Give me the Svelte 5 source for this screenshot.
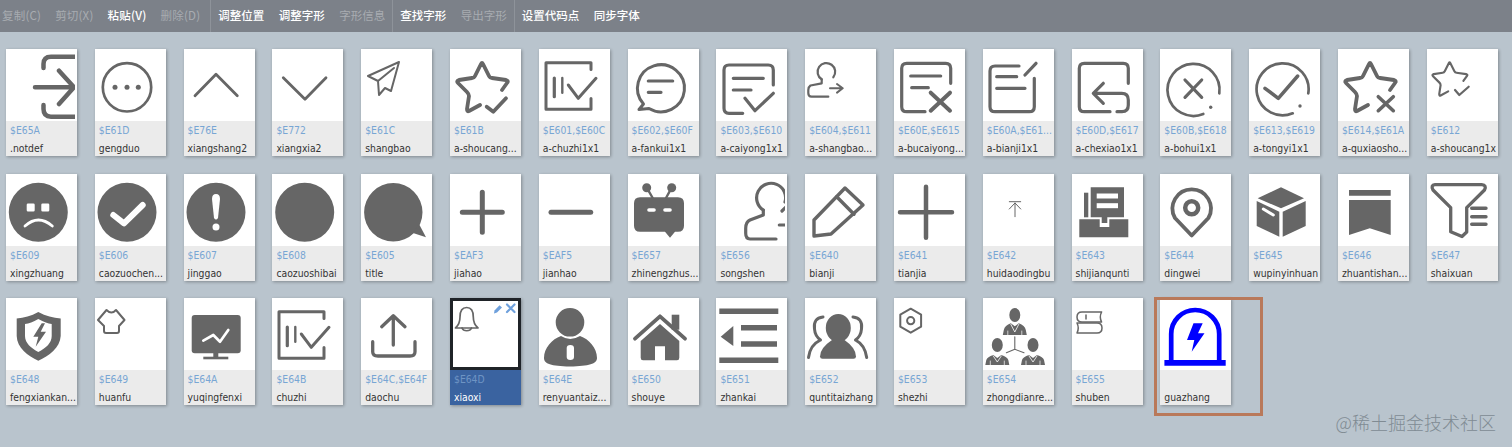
<script>
	const INK = '#666';
	const BLUE = '#0000ff';

	// s = stroked path, f = filled path; coordinates are card pixels
	const s = (d, w = 3, c = INK, tf) => ({ d, fill: 'none', stroke: c, sw: w, tf });
	const f = (d, c = INK) => ({ d, fill: c, stroke: 'none', sw: 0 });
	const circle = (cx, cy, r) =>
		`M${cx - r} ${cy}a${r} ${r} 0 1 0 ${2 * r} 0a${r} ${r} 0 1 0 ${-2 * r} 0Z`;
	const rect = (x, y, w, h) => `M${x} ${y}h${w}v${h}h${-w}Z`;
	const ellipse = (cx, cy, rx, ry) =>
		`M${cx - rx} ${cy}a${rx} ${ry} 0 1 0 ${2 * rx} 0a${rx} ${ry} 0 1 0 ${-2 * rx} 0Z`;

	const STAR =
		'M52 41L57 34Q59 32 56 31L42 29Q40 29 39 27L33 15Q32 13 31 15L25 27Q24 29 22 29L9 31Q6 32 8 34L17 43Q19 45 19 47L17 60Q17 63 19 62L30 56';

	const chuzhi = [
		s('M52 20.5V13.7H7V60.3H52V49.5', 3),
		s('M15.3 29V47.7', 3.2),
		s('M23.3 29V43.7', 2.4),
		s('M29.3 36L39.3 49.3L57 29.3', 3)
	];

	const person = (x, y, t, b) => [
		f(ellipse(x, y, 5.5, 7)),
		f(`M${x - 12} ${b}L${x - 11} ${b - 5}Q${x - 10} ${t + 2} ${x - 4} ${t}L${x} ${t + 3}L${x + 4} ${t}Q${x + 10} ${t + 2} ${x + 11} ${b - 5}L${x + 12} ${b}Z`),
		s(`M${x - 4} ${t + 1}L${x} ${b - 3}L${x + 4} ${t + 1}`, 0.8, '#fff'),
		s(`M${x - 7} ${b}V${b - 4}M${x + 7} ${b}V${b - 4}`, 0.7, '#fff')
	];

	const icons = {
		notdef: [
			s('M70 7.7H45Q37.5 7.7 37.5 15V19M37.5 56V60Q37.5 67.7 45 67.7H70', 4.5),
			s('M29 38.3H70M53 21.7L68 38.3L53 55', 4.5)
		],
		more: [
			s(circle(32, 38.3, 24.2), 2.7),
			f(circle(20, 38.3, 2.5)),
			f(circle(32, 38.3, 2.5)),
			f(circle(43.3, 38.3, 2.5))
		],
		up: [s('M11 46.7L32 25.3L53.3 46.7', 2.8)],
		down: [s('M11.3 28.7L33 50.3L54 28.7', 2.8)],
		plane: [s('M38 13L7 27L17 32L18 46L24 39L30 42ZM17 32L33 19', 2)],
		starCheck: [s(STAR, 3.8), s('M36.7 57.7L43.3 62.7L56 49.3', 3.8)],
		chuzhi,
		feedback: [
			s('M21 59.5L11 60.5L15.5 55A23.5 23.5 0 1 1 21 59.5Z', 3),
			s('M20.3 32H44.7M20.3 43.3H33', 3.2)
		],
		adopt: [
			s('M57.3 36V21Q57.3 16 52.3 16H13Q8 16 8 21V59.3Q8 64.3 13 64.3H26.7', 3.2),
			s('M17.3 29.3H47.3M17.3 41H35', 3.2),
			s('M29 49.3L39 61.7L57.3 44.3', 3.2)
		],
		report: [
			s('M16.7 30.3V34.3L5.5 36.5Q3.3 38 3.3 41V44Q3.3 47.7 6.5 47.7H23.3', 2.2),
			s('M16.7 30.3A8.8 8.8 0 1 1 28.3 28.3', 2.2),
			s('M25 39.3H37.7M32 35L37.7 39.3L32 43.6', 2)
		],
		reject: [
			s('M56.7 34.3V19.3Q56.7 14.3 51.7 14.3H12.7Q7.7 14.3 7.7 19.3V57.7Q7.7 62.7 12.7 62.7H31', 3.2),
			s('M16.7 27H46.7M17.7 38.7H34.3', 3.2),
			s('M36.7 43.7L56 61.7M56 43.7L36.7 61.7', 4)
		],
		edit: [
			s('M36 17H12Q7 17 7 22V57.7Q7 62.7 12 62.7H46.3Q51.3 62.7 51.3 57.7V29.3', 3.2),
			s('M13.7 27.7H33.7M13.7 39.3H42M42 26L53 14.3', 3.2)
		],
		undo: [
			s('M56.3 34.3V19.3Q56.3 14.3 51.3 14.3H12.3Q7.3 14.3 7.3 19.3V57.7Q7.3 62.7 12.3 62.7H38', 3.2),
			s('M31.3 34.3L21.3 44.3L31.3 54.3M21.3 44.3H49.7Q56.3 44.3 56.3 51V56Q56.3 62.7 50 62.7H45', 3.2)
		],
		rebut: [
			s('M59.3 44.3A26 26 0 1 0 43.3 65', 2.7),
			s('M25 31L41.7 48.3M41.7 31L25 48.3', 3.2),
			f(circle(50.7, 58.3, 1.7))
		],
		agree: [
			s('M59.3 44.3A26 26 0 1 0 43.7 64.3', 2.7),
			s('M16 39.3L29.3 49.3L48.7 27', 3.5),
			f(circle(51, 57, 1.7))
		],
		starX: [s(STAR, 3.8), s('M40.3 47.7L55.3 61.7M55.3 47.7L40.3 61.7', 3.6)],
		starSmall: [
			s(STAR, 3.1, INK, 'translate(.5 3.7) scale(.69)'),
			s('M28 41L32.3 46L41.7 37.7', 2.2)
		],
		sad: [
			f(circle(32.3, 38.3, 29.5)),
			f('M22 29.5h5.4q1.3 0 1.3 1.3v5.4q0 1.3-1.3 1.3h-5.4q-1.3 0-1.3-1.3v-5.4q0-1.3 1.3-1.3Z', '#fff'),
			f('M36.6 29.5h5.4q1.3 0 1.3 1.3v5.4q0 1.3-1.3 1.3h-5.4q-1.3 0-1.3-1.3v-5.4q0-1.3 1.3-1.3Z', '#fff'),
			s('M19 52Q32.3 40 46.3 52', 2.8, '#fff')
		],
		ok: [f(circle(32, 38.3, 29.5)), s('M18.3 41L29 49.3L47.7 31', 6, '#fff')],
		warn: [
			f(circle(32, 38.3, 29.5)),
			f('M28 25Q28 20 32 20Q36 20 36 25L34 44Q32 47 30 44Z', '#fff'),
			f(circle(32, 53, 3.5), '#fff')
		],
		fail: [f(circle(32.7, 38.3, 29.5))],
		bubble: [
			f(circle(32.3, 38.3, 29.2)),
			f('M52 59L65 63.3L58 50Z')
		],
		plus: [s('M12.3 38.3H52.3M32.3 18.3V58.3', 5)],
		minus: [s('M12 38.3H51.7', 5)],
		robot: [
			f('M12 23.3H50Q56 23.3 56 29.3V51.7Q56 57.7 50 57.7H47L42 63.7L37 57.7H12Q6 57.7 6 51.7V29.3Q6 23.3 12 23.3Z'),
			s('M18.7 13.7L24.7 24M43.7 13.7L38 24', 2.4),
			f(circle(18.7, 13.7, 4.5)),
			f(circle(43.7, 13.7, 4.5)),
			f('M21 34.2h5q1.8 0 1.8 1.8t-1.8 1.8h-5q-1.8 0-1.8-1.8t1.8-1.8Z', '#fff'),
			f('M37 34.2h5q1.8 0 1.8 1.8t-1.8 1.8h-5q-1.8 0-1.8-1.8t1.8-1.8Z', '#fff')
		],
		submit: [
			s('M47.3 36V41L34 46Q29.7 48 29.7 54.3V59.3Q29.7 65 34 65H60', 3.2),
			s('M47.3 36A14.5 14.5 0 1 1 69 28', 3.2),
			s('M63.3 51H72M66 37L72 31', 3.2)
		],
		pencil: [
			s('M40 14L58 31L26 60L9 62L9 46Z', 3.4),
			s('M31.7 22.7L49 40.3', 3.4)
		],
		add: [s('M6 38.3H58M32 12.8V63.8', 4.5)],
		top: [s('M26.3 27.7H37.7M32 29V42.7M26.3 35L32 29L37.7 35', 1)],
		inbox: [
			f('M7.3 45.3H27.7V53H37.3V45.3H56.3V63.3H7.3Z'),
			f('M18.7 13.3H52V43.3H35.3V49H29.7V43.3H18.7Z'),
			f(rect(24.7, 19.5, 21.3, 5), '#fff'),
			f(rect(24.7, 29.2, 21.3, 5), '#fff'),
			f(rect(12, 18.7, 4.3, 24.6))
		],
		pin: [
			s('M31.7 61.5L15 44A19.2 19.2 0 1 1 48.4 44Z', 3.8),
			s(circle(31.7, 33.7, 6.5), 4.5)
		],
		box: [
			f('M32 13.3L55 24.3L32 34.3L8.7 24.3Z'),
			f('M7.7 27L30.3 37.7V62.7L7.7 52Z'),
			f('M33.7 37.7L56.7 27V52L33.7 62.7Z'),
			s('M14.3 35L24.3 41', 3, '#fff')
		],
		banner: [f(rect(11, 16, 41.7, 5.7)), f('M11 26H52.7V61L31.8 54.3L11 61Z')],
		filter: [
			s('M8 10.7H54.7Q60 11 57.5 16L39.7 33.7V58L35 62.5L23.7 57.7V33.7L6 16Q3.5 11 8 10.7Z', 3.3),
			s('M44.7 34.3H59M44.7 42.7H59M44.7 50.3H59', 3.4)
		],
		shield: [
			f('M32.3 14C25 18 18 20 10.7 20.5V38C11 50 22 58 32.3 62.7C43 58 54 50 54.7 38V20.5C47 20 40 18 32.3 14Z'),
			f('M32.3 21C27 24 23 25.5 19 26V38C19 45 25 50 32.3 54C40 50 45.7 45 45.7 38V26C42 25.5 38 24 32.3 21Z', '#fff'),
			f('M35.7 25.3L27.3 38.7H32.3L29.7 48.7L40 33.7H34.7L39 25.3Z')
		],
		shirt: [
			s('M11.5 12L3 22L9 28V33Q9 35 11 35H22Q24 35 24 33V28L29.5 22L21 12Q16.5 17 11.5 12Z', 2)
		],
		monitor: [
			f('M10.7 17H53.7Q56.7 17 56.7 20V52.3Q56.7 55.3 53.7 55.3H10.7Q7.7 55.3 7.7 52.3V20Q7.7 17 10.7 17Z'),
			s('M19.3 42.7L29.3 37L36 43.7L44.3 32', 2.7, '#fff'),
			f(rect(29.3, 55, 5, 4)),
			f(rect(19.3, 58.7, 25, 2.6))
		],
		upload: [
			s('M32.3 20.3V47M20.7 28.7L32.3 17.7L44 28.7', 3.3),
			s('M11.7 43.7V53.7Q11.7 58 17 58H49Q54 58 54 53.7V43.7', 3.3)
		],
		bell: [
			s('M5.5 30Q10 26 10 19C10 12 13 9.5 16.7 9.5C20.5 9.5 23.3 12 23.3 19Q23.3 26 28 30Z', 1.7),
			s('M12 30A5 4 0 0 0 21.5 30', 1.7),
			f('M44.5 12.5L49.5 7.2L52 9.5L47 14.5L44 15.5Z', '#6ea0dc'),
			s('M57 6.5L64.5 14M64.5 6.5L57 14', 2.2, '#6ea0dc')
		],
		staff: [
			f(circle(31, 24.3, 14.3)),
			f('M22 38Q31 44 41 38C50 41 58 50 58 60C58 66 50 68 31 68.5C12 68 5 66 5 60C5 50 13 41 22 38Z'),
			f('M27.7 50Q27.7 47 31.3 47Q35 47 35 50V59Q35 62 31.3 62Q27.7 62 27.7 59Z', '#fff')
		],
		home: [
			s('M7 40.7L32 18.3L57 40.7', 3.8),
			f(rect(43.7, 16.7, 7.6, 15)),
			f('M32 26L51.3 43V59.8Q51.3 62.3 49 62.3H37V48.3H27V62.3H15Q12.7 62.3 12.7 59.8V43Z')
		],
		expand: [
			f(rect(3.3, 10.5, 59, 5.5)),
			f(rect(25, 27, 36, 5.5)),
			f(rect(25, 43.3, 36, 5.5)),
			f(rect(3.3, 59.6, 59, 5.5)),
			f('M17.3 28L4.7 38.7L17.3 48Z')
		],
		group: [
			f(ellipse(33.3, 30, 12.5, 14)),
			f('M15 58.5Q15 50 27 42H39.5Q51 50 51 58.5Q51 60.7 48.5 60.7H17.5Q15 60.7 15 58.5Z'),
			s('M18 19Q8 20 9.5 31Q10 38 15.5 42Q5 47 3.5 59.5', 3),
			s('M48 19Q58 20 56.5 31Q56 38 50.5 42Q60 47 61.7 59.5', 3)
		],
		gear: [
			s('M16.7 10.7L27.1 16.7V28.7L16.7 34.7L6.3 28.7V16.7Z', 2),
			s(circle(16.7, 22.7, 3.6), 2)
		],
		team: [
			...person(31.8, 17, 25.3, 37),
			...person(14.3, 47, 57, 67),
			...person(50, 47, 57, 67),
			s('M31.8 38.7V51.3L23.4 54.7M31.8 51.3L41 54.7', 1.1)
		],
		books: [
			s('M29.6 14H10Q5 14 5 19Q5 24 10 24H29.6Q27 19 29.6 14ZM14 17V21', 1.5),
			s('M5 25H25Q30 25 30 30Q30 35 25 35H5Q7.5 30 5 25Z', 1.5)
		],
		fault: [
			s('M11.2 62V36A24 24 0 0 1 59.2 36V62', 4.7, BLUE),
			f(rect(4.4, 62, 61.3, 5.7), BLUE),
			f('M33.5 25.3H42.7L38 35.3H44.5L31.7 53.7L34.3 42H27Z', BLUE)
		]
	};

	const cards = [
		['$E65A', '.notdef', 'notdef'],
		['$E61D', 'gengduo', 'more'],
		['$E76E', 'xiangshang2', 'up'],
		['$E772', 'xiangxia2', 'down'],
		['$E61C', 'shangbao', 'plane'],
		['$E61B', 'a-shoucang...', 'starCheck'],
		['$E601,$E60C', 'a-chuzhi1x1', 'chuzhi'],
		['$E602,$E60F', 'a-fankui1x1', 'feedback'],
		['$E603,$E610', 'a-caiyong1x1', 'adopt'],
		['$E604,$E611', 'a-shangbao...', 'report'],
		['$E60E,$E615', 'a-bucaiyong...', 'reject'],
		['$E60A,$E61...', 'a-bianji1x1', 'edit'],
		['$E60D,$E617', 'a-chexiao1x1', 'undo'],
		['$E60B,$E618', 'a-bohui1x1', 'rebut'],
		['$E613,$E619', 'a-tongyi1x1', 'agree'],
		['$E614,$E61A', 'a-quxiaosho...', 'starX'],
		['$E612', 'a-shoucang1x', 'starSmall'],
		['$E609', 'xingzhuang', 'sad'],
		['$E606', 'caozuochen...', 'ok'],
		['$E607', 'jinggao', 'warn'],
		['$E608', 'caozuoshibai', 'fail'],
		['$E605', 'title', 'bubble'],
		['$EAF3', 'jiahao', 'plus'],
		['$EAF5', 'jianhao', 'minus'],
		['$E657', 'zhinengzhus...', 'robot'],
		['$E656', 'songshen', 'submit'],
		['$E640', 'bianji', 'pencil'],
		['$E641', 'tianjia', 'add'],
		['$E642', 'huidaodingbu', 'top'],
		['$E643', 'shijianqunti', 'inbox'],
		['$E644', 'dingwei', 'pin'],
		['$E645', 'wupinyinhuan', 'box'],
		['$E646', 'zhuantishan...', 'banner'],
		['$E647', 'shaixuan', 'filter'],
		['$E648', 'fengxiankan...', 'shield'],
		['$E649', 'huanfu', 'shirt'],
		['$E64A', 'yuqingfenxi', 'monitor'],
		['$E64B', 'chuzhi', 'chuzhi'],
		['$E64C,$E64F', 'daochu', 'upload'],
		['$E64D', 'xiaoxi', 'bell'],
		['$E64E', 'renyuantaiz...', 'staff'],
		['$E650', 'shouye', 'home'],
		['$E651', 'zhankai', 'expand'],
		['$E652', 'quntitaizhang', 'group'],
		['$E653', 'shezhi', 'gear'],
		['$E654', 'zhongdianre...', 'team'],
		['$E655', 'shuben', 'books'],
		['', 'guazhang', 'fault']
	];

	const toolbar = [
		[['复制(C)', 1], ['剪切(X)', 1], ['粘贴(V)', 0], ['删除(D)', 1]],
		[['调整位置', 0], ['调整字形', 0], ['字形信息', 1]],
		[['查找字形', 0], ['导出字形', 1]],
		[['设置代码点', 0], ['同步字体', 0]]
	];
</script>

<div class="page">
	<nav class="toolbar">
		{#each toolbar as group}
			<div class="tool-group">
				{#each group as [label, disabled]}
					<span class="tool" class:disabled>{label}</span>
				{/each}
			</div>
		{/each}
	</nav>

	<main class="grid">
		{#each cards as [code, name, icon]}
			<div class="card" class:selected={name === 'xiaoxi'} class:marked={name === 'guazhang'}>
				<div class="glyph">
					<svg width="69" height="72" viewBox="0 0 69 72" stroke-linecap="round" stroke-linejoin="round">
						{#each icons[icon] as p}
							<path
								d={p.d}
								fill={p.fill}
								stroke={p.stroke}
								stroke-width={p.sw}
								transform={p.tf}
							/>
						{/each}
					</svg>
				</div>
				<div class="meta">
					<span class="code">{code}</span>
					<span class="name">{name}</span>
				</div>
			</div>
		{/each}
	</main>

	<div class="watermark">@稀土掘金技术社区</div>
</div>

<style>
	:global(body) {
		background: #b9c4cd;
	}

	.page {
		position: relative;
		height: 447px;
		overflow: hidden;
		font-family: 'DejaVu Sans Condensed', 'DejaVu Sans', 'Noto Sans CJK SC', sans-serif;
	}

	.toolbar {
		display: flex;
		box-sizing: border-box;
		height: 32px;
		padding: 0 0 0 2px;
		background: #7c8189;
	}

	.tool-group {
		display: flex;
		align-items: center;
		gap: 14.5px;
		padding: 0 7px 2px;
		border-right: 1px solid #8e939a;
	}

	.tool-group:first-child {
		gap: 14px;
		padding-left: 0;
		padding-right: 10px;
	}

	.tool-group:first-child .tool {
		letter-spacing: 0.2px;
	}

	.tool-group:last-child {
		border-right: none;
	}

	.tool {
		font-family: 'Noto Sans CJK SC', sans-serif;
		font-size: 11.5px;
		font-weight: 500;
		color: #fff;
		white-space: nowrap;
	}

	.tool.disabled {
		color: #a8acb1;
		font-weight: 400;
	}

	.grid {
		display: grid;
		grid-template-columns: repeat(17, 71px);
		gap: 17.5px 17.8px;
		padding: 17px 0 0 6px;
	}

	.card {
		position: relative;
		height: 107px;
		box-shadow: 1px 1px 3px rgba(0, 0, 0, 0.3);
	}

	.glyph {
		height: 72px;
		background: #fff;
		overflow: hidden;
	}

	.glyph svg {
		display: block;
	}

	.meta {
		display: flex;
		flex-direction: column;
		gap: 2px;
		height: 35px;
		padding: 1px 0 0 4px;
		box-sizing: border-box;
		background: #ebebeb;
		font-size: 10.3px;
		line-height: 16px;
		white-space: nowrap;
		overflow: hidden;
	}

	.code {
		height: 16px;
		color: #78a6d4;
	}

	.name {
		color: #333;
	}

	.selected .glyph {
		outline: 3px solid #1f2328;
		outline-offset: -3px;
	}

	.selected .meta {
		background: #3a63a0;
	}

	.selected .code {
		color: #6e94c4;
	}

	.selected .name {
		color: #fff;
	}

	/* review annotation round the last card */
	.marked::after {
		content: '';
		position: absolute;
		left: -6px;
		top: -1px;
		width: 103px;
		height: 113px;
		border: 3px solid #b9795a;
	}

	.watermark {
		position: absolute;
		right: 16px;
		bottom: 14px;
		font-family: 'Noto Sans CJK SC', sans-serif;
		font-size: 18px;
		font-weight: 300;
		line-height: 22px;
		color: #808b93;
	}
</style>
